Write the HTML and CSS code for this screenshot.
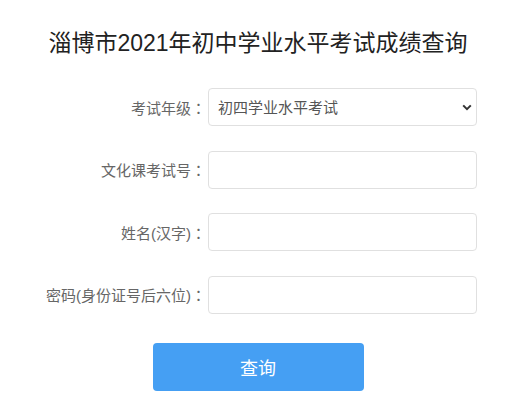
FILE: index.html
```html
<!DOCTYPE html>
<html lang="zh-CN">
<head>
<meta charset="utf-8">
<title>淄博市2021年初中学业水平考试成绩查询</title>
<link rel="stylesheet" href="styles.css">
</head>
<body>
<div class="page">
  <h1 class="title">淄博市2021年初中学业水平考试成绩查询</h1>
  <form class="form">
    <label class="label">考试年级<span class="colon" lang="zh-TW">：</span></label>
    <div class="control select-wrap">
      <select class="field select">
        <option>初四学业水平考试</option>
      </select>
      <svg class="chevron" width="10" height="7" viewBox="0 0 10 7"><path d="M1.2 1.4 L5 5.2 L8.8 1.4" fill="none" stroke="#333" stroke-width="2"/></svg>
    </div>
    <label class="label">文化课考试号<span class="colon" lang="zh-TW">：</span></label>
    <input class="field control" type="text">
    <label class="label">姓名(汉字)<span class="colon" lang="zh-TW">：</span></label>
    <input class="field control" type="text">
    <label class="label">密码(身份证号后六位)<span class="colon" lang="zh-TW">：</span></label>
    <input class="field control" type="password">
  </form>
  <div class="actions">
    <button class="btn" type="button">查询</button>
  </div>
</div>
</body>
</html>
```
FILE: styles.css
```css
html, body {
  margin: 0;
  padding: 0;
  background: #fff;
}
body {
  font-family: "Liberation Sans", "Noto Sans CJK SC", sans-serif;
  color: #333;
}
.page {
  width: 509px;
  padding-top: 26px;
}
.title {
  margin: 0;
  font-size: 23px;
  font-weight: normal;
  line-height: 34px;
  color: #222;
  text-align: center;
  padding-left: 7px;
}
.form {
  display: grid;
  grid-template-columns: 1fr 269px;
  column-gap: 2px;
  row-gap: 24.5px;
  width: 477px;
  margin-top: 28px;
}
.label {
  font-size: 15px;
  color: #666;
  text-align: right;
  align-self: center;
  white-space: nowrap;
}
.colon {
  display: inline-block;
  width: 15px;
  text-align: center;
  font-family: "Noto Sans CJK TC", sans-serif;
}
.field {
  box-sizing: border-box;
  height: 38px;
  width: 269px;
  border: 1px solid #e0e0e0;
  border-radius: 4px;
  background: #fff;
  font-family: "Liberation Sans", "Noto Sans CJK SC", sans-serif;
  font-size: 15px;
  color: #555;
  padding: 0 9px;
  outline: none;
  margin: 0;
}
.select-wrap {
  position: relative;
  height: 38px;
}
.select {
  appearance: none;
  -webkit-appearance: none;
}
.chevron {
  position: absolute;
  right: 5px;
  top: 16px;
  pointer-events: none;
}
.actions {
  display: flex;
  justify-content: center;
  padding-left: 7px;
  margin-top: 29px;
}
.btn {
  width: 211px;
  height: 48px;
  border: none;
  border-radius: 4px;
  background: #459ff3;
  color: #fff;
  font-family: "Noto Sans CJK SC", sans-serif;
  font-size: 18px;
  cursor: pointer;
}
```
